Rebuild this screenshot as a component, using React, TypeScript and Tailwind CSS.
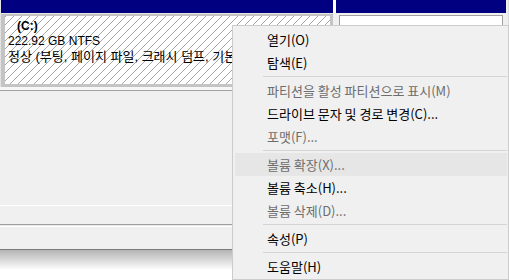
const menuFont = {
  fontFamily: '"Noto Sans CJK KR", "Noto Sans", sans-serif',
};

type Entry =
  | { kind: "item"; label: string; disabled?: boolean; active?: boolean }
  | { kind: "sep" };

const entries: Entry[] = [
  { kind: "item", label: "열기(O)" },
  { kind: "item", label: "탐색(E)" },
  { kind: "sep" },
  { kind: "item", label: "파티션을 활성 파티션으로 표시(M)", disabled: true },
  { kind: "item", label: "드라이브 문자 및 경로 변경(C)..." },
  { kind: "item", label: "포맷(F)...", disabled: true },
  { kind: "sep" },
  { kind: "item", label: "볼륨 확장(X)...", disabled: true, active: true },
  { kind: "item", label: "볼륨 축소(H)..." },
  { kind: "item", label: "볼륨 삭제(D)...", disabled: true },
  { kind: "sep" },
  { kind: "item", label: "속성(P)" },
  { kind: "sep" },
  { kind: "item", label: "도움말(H)" },
];

const ContextMenu = () => {
  return (
    <div
      className="absolute left-[232px] top-[25px] w-[277px] border border-[#cccccc] bg-[#f0f0f0] pl-[2px] pr-[1px] pt-[2px] pb-[1px] text-[13px]"
      style={menuFont}
    >
      {entries.map((e, i) =>
        e.kind === "sep" ? (
          <div key={i} className="h-[5px] pt-[2px] pl-[28px]">
            <div className="h-px bg-[#d4d4d4]" />
          </div>
        ) : (
          <div
            key={i}
            className={
              "flex h-[23px] items-center pl-[32px] " +
              (e.active ? "bg-[#e6e6e6] " : "") +
              (e.disabled ? "text-[#6d6d6d]" : "text-black")
            }
          >
            {e.label}
          </div>
        )
      )}
    </div>
  );
};

const App = () => {
  return (
    <div
      className="relative h-[280px] w-[509px] overflow-hidden bg-white text-[12px] text-black"
      style={{ fontFamily: '"Liberation Sans", "Noto Sans CJK KR", sans-serif' }}
    >
      <div className="bg-[#f0f0f0]">
        {/* partitions row */}
        <div className="flex h-[87px]">
          <div className="flex w-[333px] flex-col border-l border-[#e3e3e3]">
            <div className="h-[13px] bg-[#000080]" />
            <div className="flex flex-1 flex-col border-t border-[#e6e6e6] bg-[#c4c4c4] pl-[4px] pr-[3px] pt-[2px] pb-[3px]">
              <div className="flex-1 bg-[repeating-linear-gradient(135deg,#a8a8a8_0px,#a8a8a8_1px,#ffffff_1px,#ffffff_5.66px)] pl-[3px] pt-[3px] leading-[15px]">
                <div className="w-[224px] overflow-hidden whitespace-nowrap">
                  <div className="pl-[9px] font-bold">(C:)</div>
                  <div>222.92 GB NTFS</div>
                  <div className="text-[13px]">정상 (부팅, 페이지 파일, 크래시 덤프, 기본</div>
                </div>
              </div>
            </div>
          </div>
          <div className="flex w-[3px] flex-col">
            <div className="h-[13px] bg-white" />
          </div>
          <div className="flex w-[170px] flex-col">
            <div className="h-[13px] bg-[#000080]" />
            <div className="flex flex-1 flex-col px-[3px] pt-[2px] pb-[3px]">
              <div className="flex-1 border border-[#a0a0a0] bg-white" />
            </div>
          </div>
          <div className="flex-1 border-r border-[#dcdcdc]" />
        </div>

        {/* lower area */}
        <div className="h-[3px] bg-[#f7f7f7]" />
        <div className="h-px bg-[#a0a0a0]" />
        <div className="h-[114px]" />
        <div className="h-px bg-white" />
        <div className="h-[18px]" />
        <div className="h-px bg-[#a0a0a0]" />
        <div className="h-px bg-[#e8e8e8]" />
        <div className="h-px bg-white" />
        <div className="h-[22px]" />
        <div className="h-px bg-[#7a7a7a]" />
      </div>
      <div className="h-[20px] bg-[linear-gradient(to_bottom,#b4b4b4,#ffffff)]" />

      <ContextMenu />
    </div>
  );
};

export default App;
